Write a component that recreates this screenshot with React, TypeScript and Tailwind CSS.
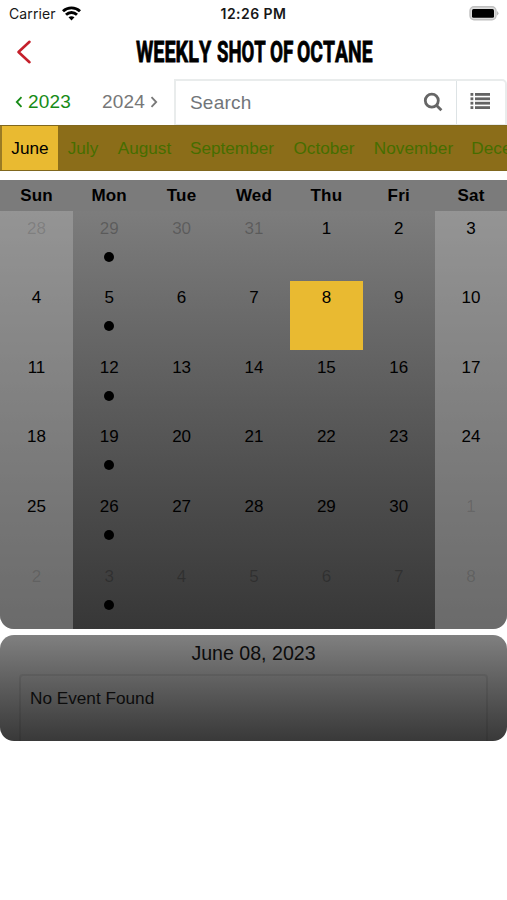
import React from "react";

const months = [
  { name: "June", width: "w-[58px]" },
  { name: "July", width: "w-[50px]" },
  { name: "August", width: "w-[73px]" },
  { name: "September", width: "w-[102px]" },
  { name: "October", width: "w-[82px]" },
  { name: "November", width: "w-[97px]" },
  { name: "December", width: "w-[98px]" },
];

const weekdays = ["Sun", "Mon", "Tue", "Wed", "Thu", "Fri", "Sat"];

// The grid starts on Sunday, May 28.
const days = [28, 29, 30, 31, ...Array.from({ length: 30 }, (_, i) => i + 1), 1, 2, 3, 4, 5, 6, 7, 8];

const titleWords = [
  { text: "WEEKLY", box: "w-[81px]", scale: "scale-x-[.66]" },
  { text: "SHOT", box: "w-[53px]", scale: "scale-x-[.618]" },
  { text: "OF", box: "w-[27.5px]", scale: "scale-x-[.63]" },
  { text: "OCTANE", box: "w-[76px]", scale: "scale-x-[.645]" },
];

function StatusBar() {
  return (
    <div className="grid h-[27px] grid-cols-3 items-center px-[9px] font-['Inter',sans-serif] text-[#181818]">
      <div className="flex items-center gap-[6px]">
        <span className="text-[14px] leading-[27px] tracking-[0.1px]">Carrier</span>
        <svg width="19" height="15" viewBox="0 0 19 15" fill="none" stroke="#000" strokeWidth="2.9">
          <path d="M1 5.2C5.8 .7 13.2 .7 18 5.2" />
          <path d="M4 8.8C7.2 5.8 11.8 5.8 15 8.8" />
          <path d="M6.5 11.3C8.3 9.8 10.7 9.8 12.5 11.3L9.5 14.4Z" fill="#000" stroke="none" />
        </svg>
      </div>
      <span className="text-center text-[14px] font-semibold leading-[27px] tracking-[0.45px]">12:26 PM</span>
      <svg className="-mr-[1px] justify-self-end" width="31" height="15" viewBox="0 0 31 15">
        <rect x="2" y=".8" width="26" height="13" rx="4" fill="#ddd" stroke="#c0c0c0" strokeWidth="1.4" />
        <rect x="4" y="2.9" width="22" height="8.8" rx="1.5" fill="#000" />
        <path d="M29.2 5Q31.6 7.3 29.2 9.6Z" fill="#aaa" />
      </svg>
    </div>
  );
}

function Header() {
  return (
    <header className="flex h-[52px] items-center pl-[16px]">
      <svg className="-mt-[2px]" width="16" height="26" viewBox="0 0 16 26" fill="none" stroke="#c5202b" strokeWidth="2.6" strokeLinecap="round" strokeLinejoin="round">
        <path d="M13.5 2.8 2.5 13l11 10.2" />
      </svg>
      <h1 className="ml-[103.5px] flex h-[30px] font-['Roboto',sans-serif] text-[30px] font-bold leading-[28px] text-black">
        {titleWords.map((word) => (
          <span key={word.text} className={word.box}>
            <span className={`inline-block origin-left [font-kerning:none] [-webkit-text-stroke:0.8px_#000] ${word.scale}`}>{word.text}</span>
          </span>
        ))}
      </h1>
    </header>
  );
}

function Toolbar() {
  return (
    <div className="flex h-[46px] text-[19px] leading-[46px]">
      <div className="flex w-[174px] items-center pl-[15px]">
        <span className="flex items-center gap-[5px] text-[#168b16]">
          <svg width="8" height="12" viewBox="0 0 8 12" fill="none" stroke="currentColor" strokeWidth="1.8"><path d="M6.5 1.2 1.8 6l4.7 4.8" /></svg>
          <span className="w-[43px] tracking-[0.2px]">2023</span>
        </span>
        <span className="ml-[31px] flex items-center gap-[5px] text-[#777]">
          <span className="w-[43px] tracking-[0.2px]">2024</span>
          <svg width="8" height="12" viewBox="0 0 8 12" fill="none" stroke="currentColor" strokeWidth="1.8"><path d="M1.5 1.2 6.2 6l-4.7 4.8" /></svg>
        </span>
      </div>
      <div className="flex flex-1 items-center rounded-tr-[5px] border-2 border-b-[1px] border-[#e9ecec]">
        <span className="flex-1 pl-[14px] text-[#717579] tracking-[0.2px]">Search</span>
        <svg className="mr-[13px] -mt-[1px]" width="20" height="20" viewBox="0 0 20 20" fill="none" stroke="#666" strokeWidth="2.8">
          <circle cx="8.8" cy="8.6" r="6.5" />
          <path d="m13.4 13.2 5 5" />
        </svg>
        <div className="flex h-full w-[49px] items-center border-l border-[#dde3e5] pl-[13px]">
          <svg className="-mt-[3px]" width="21" height="18" viewBox="0 0 21 18" fill="#646464">
            {[1, 5.4, 9.8, 14.2].map((y) => (
              <g key={y}>
                <rect x=".5" y={y} width="2.8" height="2.8" />
                <rect x="5" y={y} width="15" height="2.8" />
              </g>
            ))}
          </svg>
        </div>
      </div>
    </div>
  );
}

function MonthTabs() {
  return (
    <nav className="flex h-[46px] overflow-hidden border-y border-[#80671e] bg-[#8b6d19] text-[17.2px] leading-[45px]">
      {months.map((month, index) => (
        <span
          key={month.name}
          className={`${month.width} shrink-0 whitespace-nowrap text-center ${
            index === 0 ? "border-l-2 border-[#997a24] bg-[#e9ba31] text-black" : "text-[#466d00]"
          }`}
        >
          {month.name}
        </span>
      ))}
    </nav>
  );
}

function Calendar() {
  return (
    <section className="mt-[9px] h-[449px] overflow-hidden rounded-b-[14px] bg-linear-to-b from-[#828282] to-[#373737]">
      <div className="grid h-[31px] grid-cols-[73px_repeat(5,72.4px)_1fr] bg-[#7b7b7b] text-center text-[17px] font-bold leading-[32px] tracking-[0.2px] text-black">
        {weekdays.map((weekday) => (
          <span key={weekday}>{weekday}</span>
        ))}
      </div>
      <div className="grid h-[418px] grid-cols-[73px_repeat(5,72.4px)_1fr] grid-rows-6 text-center text-[17px] leading-[20px]">
        {days.map((day, index) => {
          const column = index % 7;
          const outside = index < 4 || index > 33;
          const weekend = column === 0 || column === 6;
          const ink = !outside ? "text-black" : weekend ? "text-black/15" : "text-black/25";
          return (
            <div
              key={index}
              className={`flex flex-col items-center pt-[7.5px] ${
                index === 11 ? "bg-[#e9ba31]" : weekend ? "bg-[#b8b8b8]/40" : ""
              } ${ink}`}
            >
              <span>{day}</span>
              {column === 1 && <span className="mt-[13px] size-[10px] rounded-full bg-black" />}
            </div>
          );
        })}
      </div>
    </section>
  );
}

function Events() {
  return (
    <section className="mt-[6px] h-[106px] overflow-hidden rounded-[14px] bg-linear-to-b from-[#808080] to-[#393939] text-[#0c0c0c]">
      <h2 className="h-[39px] text-center text-[19.6px] leading-[36px]">June 08, 2023</h2>
      <div className="mx-[19px] h-[67px] rounded-t-[4px] border-2 border-b-0 border-black/8 pl-[9px] pt-[11px] text-[17.2px] leading-[22px]">
        No Event Found
      </div>
    </section>
  );
}

export default function App() {
  return (
    <main className="h-[900px] w-[507px] overflow-hidden bg-white font-['Liberation_Sans',Arial,sans-serif]">
      <StatusBar />
      <Header />
      <Toolbar />
      <MonthTabs />
      <Calendar />
      <Events />
    </main>
  );
}
